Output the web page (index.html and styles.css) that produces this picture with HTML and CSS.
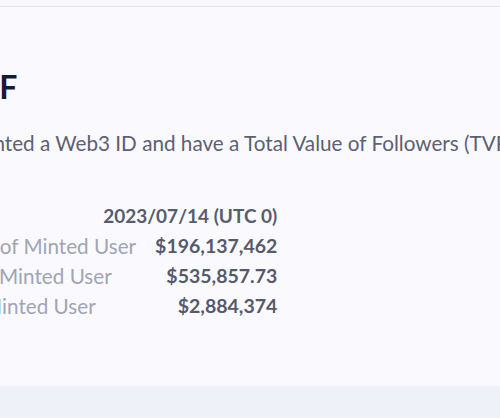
FILE: index.html
```html
<!DOCTYPE html>
<html lang="en">
<head>
<meta charset="utf-8">
<link rel="stylesheet" href="styles.css">
</head>
<body>
<div class="topbar"></div>
<main class="card">
  <div class="content">
    <h1 class="title">Net TVF</h1>
    <p class="desc">All who minted a Web3 ID and have a Total Value of Followers (TVF) above zero.</p>
    <div class="stats">
      <div class="date">2023/07/14 (UTC 0)</div>
      <div class="grid">
        <span class="label">Total TVFs of Minted User</span><span class="value">$196,137,462</span>
        <span class="label">Mean TVF Minted User</span><span class="value">$535,857.73</span>
        <span class="label">Min TVF Minted User</span><span class="value">$2,884,374</span>
      </div>
    </div>
  </div>
</main>
<div class="footer"></div>
</body>
</html>
```
FILE: styles.css
```css
html, body {
  margin: 0;
  padding: 0;
  overflow: hidden;
}
body {
  width: 500px;
  height: 418px;
  background: #eef1f8;
  font-family: Lato, "Noto Sans", sans-serif;
}
.topbar {
  height: 6px;
  background: #f8f8fb;
  border-bottom: 1px solid #e3e4ea;
}
.card {
  height: 379px;
  background: #fafafe;
  box-sizing: border-box;
  padding-top: 61px;
  overflow: hidden;
}
.content {
  margin-left: -102px;
  width: 1000px;
}
.title {
  margin: 0;
  font-size: 32px;
  line-height: 38.4px;
  font-weight: 700;
  color: #161c31;
  white-space: nowrap;
}
.desc {
  margin: 26px 0 0;
  font-size: 20.7px;
  line-height: 22.8px;
  color: #5d6071;
  white-space: nowrap;
}
.stats {
  display: inline-flex;
  flex-direction: column;
  margin-top: 45.5px;
  margin-left: 2px;
  font-size: 19.5px;
  line-height: 30px;
}
.date {
  text-align: right;
  font-size: 19px;
  font-weight: 700;
  color: #585c6c;
}
.grid {
  display: grid;
  grid-template-columns: auto auto;
  column-gap: 19px;
}
.label {
  font-size: 20.7px;
  color: #a1a4b3;
  white-space: nowrap;
}
.value {
  text-align: right;
  font-weight: 700;
  color: #565a6a;
  white-space: nowrap;
}
.footer {
  height: 32px;
  background: #eef1f8;
}
```
